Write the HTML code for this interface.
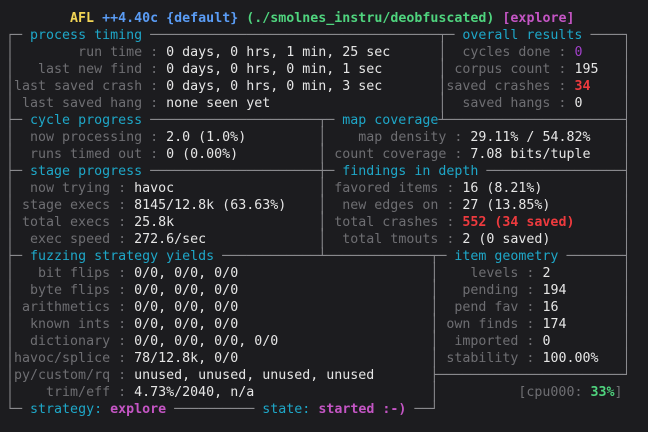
<!DOCTYPE html>
<html><head><meta charset="utf-8"><style>
html,body{margin:0;padding:0;background:#1c1c1f;width:648px;height:432px;overflow:hidden}
pre{margin:0;position:absolute;left:6px;top:10px;font-family:"DejaVu Sans Mono","Liberation Mono",monospace;font-size:13.3px;line-height:17px;color:#e6e6e6;white-space:pre}
.b{color:#8a8a8e}.l{color:#6e6e72}.h{color:#1ea7c8}.y{color:#f2d555;font-weight:bold}.bl{color:#5a9cf5;font-weight:bold}.g{color:#4fd47e;font-weight:bold}.m{color:#c455c4;font-weight:bold}.r{color:#ee3a3e;font-weight:bold}.p{color:#a040c8}
i{font-style:normal;color:#8a8a8e;display:inline-block;transform:scaleY(1.3)}
</style></head><body><pre>        <span class="y">AFL</span> <span class="bl">++4.40c</span> <span class="bl">{default}</span> <span class="g">(./smolnes_instru/deobfuscated)</span> <span class="m">[explore]</span>
<span class="b">┌─</span> <span class="h">process timing</span> <span class="b">────────────────────────────────────┬─</span> <span class="h">overall results</span> <span class="b">────┐</span>
<i>│</i><span class="l">        run time</span><span class="l"> : </span>0 days, 0 hrs, 1 min, 25 sec      <i>│</i><span class="l">  cycles done</span><span class="l"> : </span><span class="p">0</span>     <i>│</i>
<i>│</i><span class="l">   last new find</span><span class="l"> : </span>0 days, 0 hrs, 0 min, 1 sec       <i>│</i><span class="l"> corpus count</span><span class="l"> : </span>195   <i>│</i>
<i>│</i><span class="l">last saved crash</span><span class="l"> : </span>0 days, 0 hrs, 0 min, 3 sec       <i>│</i><span class="l">saved crashes</span><span class="l"> : </span><span class="r">34</span>    <i>│</i>
<i>│</i><span class="l"> last saved hang</span><span class="l"> : </span>none seen yet                     <i>│</i><span class="l">  saved hangs</span><span class="l"> : </span>0     <i>│</i>
<span class="b">├─</span> <span class="h">cycle progress</span> <span class="b">─────────────────────┬─</span> <span class="h">map coverage</span><span class="b">┴──────────────────────┤</span>
<i>│</i><span class="l">  now processing</span><span class="l"> : </span>2.0 (1.0%)         <i>│</i><span class="l">    map density</span><span class="l"> : </span>29.11% / 54.82%    <i>│</i>
<i>│</i><span class="l">  runs timed out</span><span class="l"> : </span>0 (0.00%)          <i>│</i><span class="l"> count coverage</span><span class="l"> : </span>7.08 bits/tuple    <i>│</i>
<span class="b">├─</span> <span class="h">stage progress</span> <span class="b">─────────────────────┼─</span> <span class="h">findings in depth</span> <span class="b">─────────────────┤</span>
<i>│</i><span class="l">  now trying</span><span class="l"> : </span>havoc                  <i>│</i><span class="l"> favored items</span><span class="l"> : </span>16 (8.21%)          <i>│</i>
<i>│</i><span class="l"> stage execs</span><span class="l"> : </span>8145/12.8k (63.63%)    <i>│</i><span class="l">  new edges on</span><span class="l"> : </span>27 (13.85%)         <i>│</i>
<i>│</i><span class="l"> total execs</span><span class="l"> : </span>25.8k                  <i>│</i><span class="l"> total crashes</span><span class="l"> : </span><span class="r">552 (34 saved)</span>      <i>│</i>
<i>│</i><span class="l">  exec speed</span><span class="l"> : </span>272.6/sec              <i>│</i><span class="l">  total tmouts</span><span class="l"> : </span>2 (0 saved)         <i>│</i>
<span class="b">├─</span> <span class="h">fuzzing strategy yields</span> <span class="b">────────────┴─────────────┬─</span> <span class="h">item geometry</span> <span class="b">───────┤</span>
<i>│</i><span class="l">   bit flips</span><span class="l"> : </span>0/0, 0/0, 0/0                        <i>│</i><span class="l">    levels</span><span class="l"> : </span>2         <i>│</i>
<i>│</i><span class="l">  byte flips</span><span class="l"> : </span>0/0, 0/0, 0/0                        <i>│</i><span class="l">   pending</span><span class="l"> : </span>194       <i>│</i>
<i>│</i><span class="l"> arithmetics</span><span class="l"> : </span>0/0, 0/0, 0/0                        <i>│</i><span class="l">  pend fav</span><span class="l"> : </span>16        <i>│</i>
<i>│</i><span class="l">  known ints</span><span class="l"> : </span>0/0, 0/0, 0/0                        <i>│</i><span class="l"> own finds</span><span class="l"> : </span>174       <i>│</i>
<i>│</i><span class="l">  dictionary</span><span class="l"> : </span>0/0, 0/0, 0/0, 0/0                   <i>│</i><span class="l">  imported</span><span class="l"> : </span>0         <i>│</i>
<i>│</i><span class="l">havoc/splice</span><span class="l"> : </span>78/12.8k, 0/0                        <i>│</i><span class="l"> stability</span><span class="l"> : </span>100.00%   <i>│</i>
<i>│</i><span class="l">py/custom/rq</span><span class="l"> : </span>unused, unused, unused, unused       <span class="b">├───────────────────────┘</span>
<i>│</i><span class="l">    trim/eff</span><span class="l"> : </span>4.73%/2040, n/a                      <i>│</i>          <span class="l">[cpu000: </span><span class="g">33%</span><span class="l">]</span>
<span class="b">└─</span> <span class="h">strategy:</span> <span class="m">explore</span> <span class="b">──────────</span> <span class="h">state:</span> <span class="m">started :-)</span> <span class="b">──┘</span></pre></body></html>
